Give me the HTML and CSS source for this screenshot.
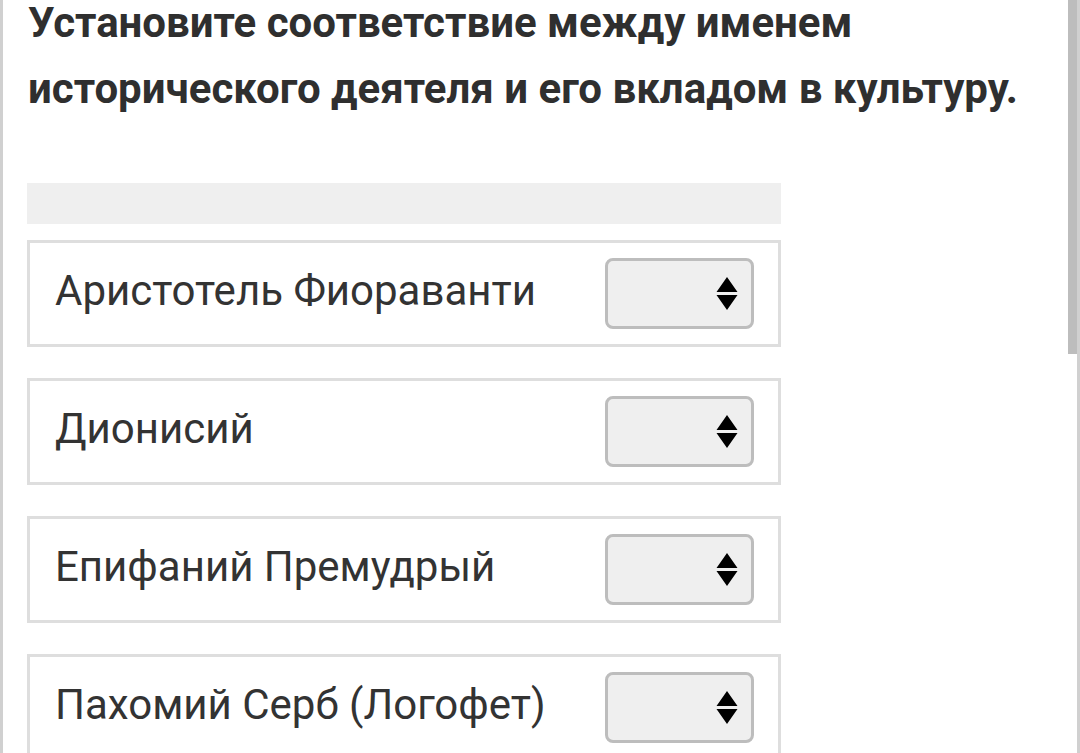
FILE: index.html
```html
<!DOCTYPE html>
<html lang="ru">
<head>
<meta charset="utf-8">
<title>Соответствие</title>
<link rel="stylesheet" href="styles.css">
</head>
<body>
<div class="page">
  <h1 class="question">Установите соответствие между именем исторического деятеля и его вкладом в культуру.</h1>
  <div class="answers-head"></div>
  <div class="match-list">
    <div class="match-row">
      <span class="match-name">Аристотель Фиораванти</span>
      <div class="picker">
        <svg class="picker-arrows" viewBox="0 0 22 34" width="22" height="34"><path d="M11 0 L21.5 15 L0.5 15 Z M0.5 18 L21.5 18 L11 33 Z" fill="#000"/></svg>
      </div>
    </div>
    <div class="match-row">
      <span class="match-name">Дионисий</span>
      <div class="picker">
        <svg class="picker-arrows" viewBox="0 0 22 34" width="22" height="34"><path d="M11 0 L21.5 15 L0.5 15 Z M0.5 18 L21.5 18 L11 33 Z" fill="#000"/></svg>
      </div>
    </div>
    <div class="match-row">
      <span class="match-name">Епифаний Премудрый</span>
      <div class="picker">
        <svg class="picker-arrows" viewBox="0 0 22 34" width="22" height="34"><path d="M11 0 L21.5 15 L0.5 15 Z M0.5 18 L21.5 18 L11 33 Z" fill="#000"/></svg>
      </div>
    </div>
    <div class="match-row">
      <span class="match-name">Пахомий Серб (Логофет)</span>
      <div class="picker">
        <svg class="picker-arrows" viewBox="0 0 22 34" width="22" height="34"><path d="M11 0 L21.5 15 L0.5 15 Z M0.5 18 L21.5 18 L11 33 Z" fill="#000"/></svg>
      </div>
    </div>
  </div>
  <div class="scroll-thumb"></div>
</div>
</body>
</html>
```
FILE: styles.css
```css
html, body {
  margin: 0;
  padding: 0;
  background: #fff;
}

.page {
  position: relative;
  box-sizing: border-box;
  height: 753px;
  overflow: hidden;
  border-left: 3px solid #d0d0d0;
  border-right: 3px solid #d0d0d0;
  padding: 0 0 0 24px;
  font-family: Roboto, "Liberation Sans", sans-serif;
  color: #333;
}

.question {
  margin: -10px 0 0 1px;
  width: 1030px;
  font-size: 42px;
  font-weight: 700;
  line-height: 66px;
  color: #2f2f2f;
}

.answers-head {
  margin-top: 61px;
  width: 754px;
  height: 41px;
  background: #efefef;
}

.match-list {
  margin-top: 16px;
  display: flex;
  flex-direction: column;
  gap: 31px;
  width: 754px;
}

.match-row {
  box-sizing: border-box;
  height: 107px;
  border: 3px solid #dedede;
  display: flex;
  align-items: center;
  justify-content: space-between;
  padding: 0 24px 0 25px;
}

.match-name {
  margin-bottom: 7px;
  font-size: 42px;
  color: #333;
}

.picker {
  box-sizing: border-box;
  width: 149px;
  height: 71px;
  border: 3px solid #bdbdbd;
  border-radius: 8px;
  background: #efefef;
  display: flex;
  align-items: center;
  justify-content: flex-end;
  padding-right: 13px;
}

.picker-arrows {
  display: block;
}

.scroll-thumb {
  position: absolute;
  top: 0;
  right: -3px;
  width: 9px;
  height: 354px;
  background: #bdbdbd;
  border-right: 3px solid #a9a9a9;
}
```
